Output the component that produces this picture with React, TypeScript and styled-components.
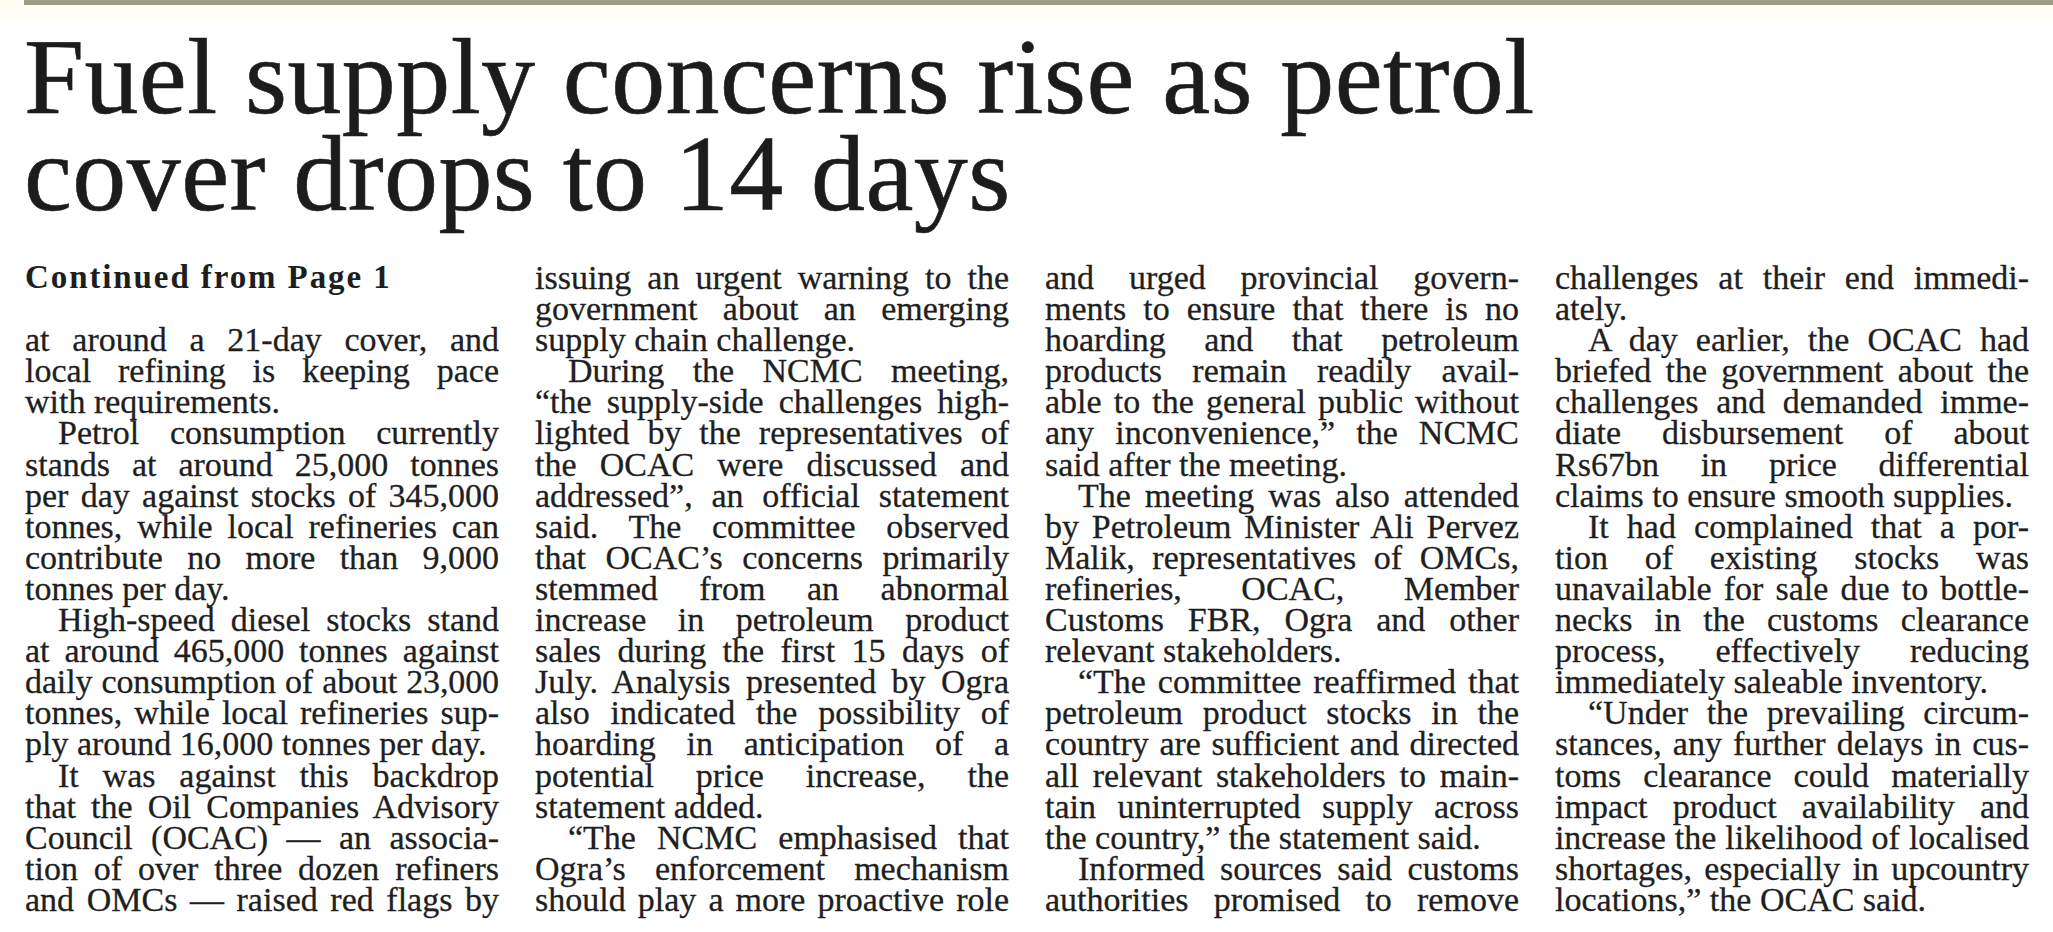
import { useLayoutEffect, useRef, useState } from 'react';
import styled, { createGlobalStyle } from 'styled-components';

const BODY_SIZE = 34;
const LEAD = 31.1;
const INDENT = 33;

type Para = { indent: boolean; open?: boolean; lines: string[] };
type Col = { kicker?: string; paras: Para[] };

const columns: Col[] = [
  {
    kicker: 'Continued from Page 1',
    paras: [
      {
        indent: false,
        lines: ['at around a 21-day cover, and', 'local refining is keeping pace', 'with requirements.'],
      },
      {
        indent: true,
        lines: [
          'Petrol consumption currently',
          'stands at around 25,000 tonnes',
          'per day against stocks of 345,000',
          'tonnes, while local refineries can',
          'contribute no more than 9,000',
          'tonnes per day.',
        ],
      },
      {
        indent: true,
        lines: [
          'High-speed diesel stocks stand',
          'at around 465,000 tonnes against',
          'daily consumption of about 23,000',
          'tonnes, while local refineries sup-',
          'ply around 16,000 tonnes per day.',
        ],
      },
      {
        indent: true,
        open: true,
        lines: [
          'It was against this backdrop',
          'that the Oil Companies Advisory',
          'Council (OCAC) — an associa-',
          'tion of over three dozen refiners',
          'and OMCs — raised red flags by',
        ],
      },
    ],
  },
  {
    paras: [
      {
        indent: false,
        lines: ['issuing an urgent warning to the', 'government about an emerging', 'supply chain challenge.'],
      },
      {
        indent: true,
        lines: [
          'During the NCMC meeting,',
          '“the supply-side challenges high-',
          'lighted by the representatives of',
          'the OCAC were discussed and',
          'addressed”, an official statement',
          'said. The committee observed',
          'that OCAC’s concerns primarily',
          'stemmed from an abnormal',
          'increase in petroleum product',
          'sales during the first 15 days of',
          'July. Analysis presented by Ogra',
          'also indicated the possibility of',
          'hoarding in anticipation of a',
          'potential price increase, the',
          'statement added.',
        ],
      },
      {
        indent: true,
        open: true,
        lines: [
          '“The NCMC emphasised that',
          'Ogra’s enforcement mechanism',
          'should play a more proactive role',
        ],
      },
    ],
  },
  {
    paras: [
      {
        indent: false,
        lines: [
          'and urged provincial govern-',
          'ments to ensure that there is no',
          'hoarding and that petroleum',
          'products remain readily avail-',
          'able to the general public without',
          'any inconvenience,” the NCMC',
          'said after the meeting.',
        ],
      },
      {
        indent: true,
        lines: [
          'The meeting was also attended',
          'by Petroleum Minister Ali Pervez',
          'Malik, representatives of OMCs,',
          'refineries, OCAC, Member',
          'Customs FBR, Ogra and other',
          'relevant stakeholders.',
        ],
      },
      {
        indent: true,
        lines: [
          '“The committee reaffirmed that',
          'petroleum product stocks in the',
          'country are sufficient and directed',
          'all relevant stakeholders to main-',
          'tain uninterrupted supply across',
          'the country,” the statement said.',
        ],
      },
      {
        indent: true,
        open: true,
        lines: ['Informed sources said customs', 'authorities promised to remove'],
      },
    ],
  },
  {
    paras: [
      {
        indent: false,
        lines: ['challenges at their end immedi-', 'ately.'],
      },
      {
        indent: true,
        lines: [
          'A day earlier, the OCAC had',
          'briefed the government about the',
          'challenges and demanded imme-',
          'diate disbursement of about',
          'Rs67bn in price differential',
          'claims to ensure smooth supplies.',
        ],
      },
      {
        indent: true,
        lines: [
          'It had complained that a por-',
          'tion of existing stocks was',
          'unavailable for sale due to bottle-',
          'necks in the customs clearance',
          'process, effectively reducing',
          'immediately saleable inventory.',
        ],
      },
      {
        indent: true,
        lines: [
          '“Under the prevailing circum-',
          'stances, any further delays in cus-',
          'toms clearance could materially',
          'impact product availability and',
          'increase the likelihood of localised',
          'shortages, especially in upcountry',
          'locations,” the OCAC said.',
        ],
      },
    ],
  },
];

const GlobalStyle = createGlobalStyle`
  html, body {
    margin: 0;
    padding: 0;
    background: #ffffff;
  }
  body {
    font-family: "Liberation Serif", "Times New Roman", serif;
    color: #1f1f1f;
  }
`;

const Page = styled.div`
  width: 2053px;
  height: 932px;
  overflow: hidden;
  display: flex;
  flex-direction: column;
  background: linear-gradient(#fdfdf0, #ffffff 28px);
`;

const TopRule = styled.div`
  height: 5px;
  margin-left: 24px;
  background: #9b9d85;
`;

const Headline = styled.h1`
  margin: 23px 0 0 24px;
  font-family: "Liberation Serif", "Times New Roman", serif;
  font-weight: 400;
  font-size: 108px;
  line-height: 97px;
  letter-spacing: 0.4px;
  color: #1c1c1c;
  -webkit-text-stroke: 0.6px #1c1c1c;
`;

const Columns = styled.div`
  margin-top: 40px;
  padding: 0 24px 0 25px;
  display: grid;
  grid-template-columns: repeat(4, minmax(0, 1fr));
  column-gap: 36px;
`;

const Column = styled.div`
  display: flex;
  flex-direction: column;
`;

const Kicker = styled.h3`
  margin: 0;
  height: ${LEAD * 2}px;
  font-family: "Liberation Serif", "Times New Roman", serif;
  font-weight: 700;
  font-size: 33px;
  line-height: ${LEAD}px;
  letter-spacing: 1.9px;
  color: #1e1e1e;
`;

const TextLine = styled.div<{ $last: boolean; $indent: boolean }>`
  height: ${LEAD}px;
  font-size: ${BODY_SIZE}px;
  line-height: ${LEAD}px;
  text-indent: ${({ $indent }) => ($indent ? `${INDENT}px` : '0')};
  text-align: ${({ $last }) => ($last ? 'left' : 'justify')};
  text-align-last: ${({ $last }) => ($last ? 'left' : 'justify')};
  color: #1f1f1f;
  -webkit-text-stroke: 0.3px #1f1f1f;
`;

let measureCtx: CanvasRenderingContext2D | null = null;
function textWidth(text: string) {
  if (!measureCtx) measureCtx = document.createElement('canvas').getContext('2d');
  if (!measureCtx) return 0;
  measureCtx.font = `${BODY_SIZE}px "Liberation Serif"`;
  return measureCtx.measureText(text).width;
}

function Line({ text, last, indent }: { text: string; last: boolean; indent: boolean }) {
  const ref = useRef<HTMLDivElement>(null);
  const [squeeze, setSqueeze] = useState(0);

  useLayoutEffect(() => {
    const el = ref.current;
    if (!el) return;
    const natural = textWidth(text) + (indent ? INDENT : 0);
    const room = el.clientWidth - 3;
    setSqueeze(natural > room ? (natural - room) / text.length : 0);
  }, [text, indent]);

  return (
    <TextLine
      ref={ref}
      $last={last}
      $indent={indent}
      style={squeeze ? { letterSpacing: `${-squeeze}px` } : undefined}
    >
      {text}
    </TextLine>
  );
}

export default function App() {
  return (
    <>
      <GlobalStyle />
      <Page>
        <TopRule />
        <Headline>
          Fuel supply concerns rise as petrol
          <br />
          cover drops to 14 days
        </Headline>
        <Columns>
          {columns.map((col, ci) => (
            <Column key={ci}>
              {col.kicker && <Kicker>{col.kicker}</Kicker>}
              {col.paras.map((p, pi) =>
                p.lines.map((text, li) => (
                  <Line
                    key={`${pi}-${li}`}
                    text={text}
                    indent={p.indent && li === 0}
                    last={li === p.lines.length - 1 && !p.open}
                  />
                ))
              )}
            </Column>
          ))}
        </Columns>
      </Page>
    </>
  );
}
